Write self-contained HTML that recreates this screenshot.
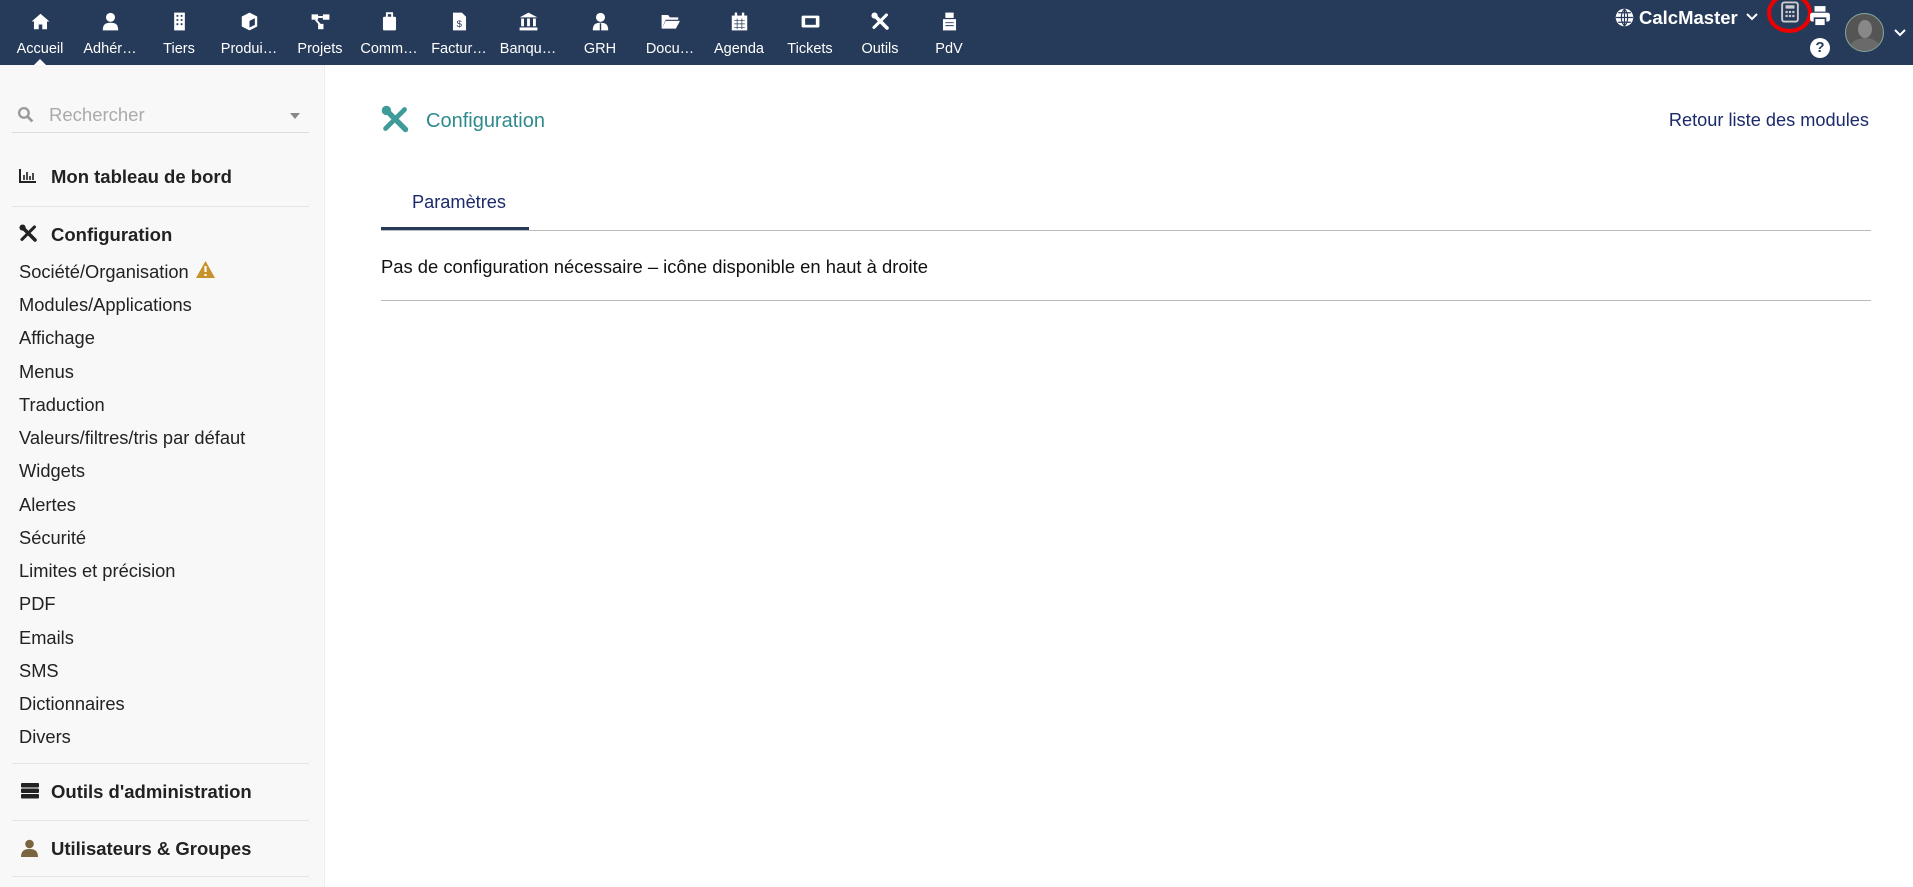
<!DOCTYPE html>
<html><head><meta charset="utf-8"><style>
*{margin:0;padding:0;box-sizing:border-box}
body{width:1913px;height:887px;overflow:hidden;font-family:"Liberation Sans",sans-serif;background:#fff;position:relative;color:#222}
.top{position:absolute;left:0;top:0;width:1913px;height:65px;background:#263a5a}
.mi{position:absolute;top:0;width:70px;height:65px;color:#fff;text-align:center}
.mi .ic{position:absolute;top:12px;left:26px;width:19px;height:19px}
.mi .lb{position:absolute;top:41px;left:-4px;width:78px;font-size:14.5px;white-space:nowrap;overflow:hidden}
.side{position:absolute;left:0;top:65px;width:325px;height:822px;background:#f8f8f8;border-right:1px solid #eee}
.a{position:absolute;white-space:nowrap}
.hr{position:absolute;left:12px;width:297px;height:1px;background:#e4e4e4}
.it{position:absolute;left:19px;font-size:18.3px;color:#222}
.h{position:absolute;left:51px;font-size:18.5px;font-weight:bold;color:#222}
</style></head><body>
<div class="top">
<div class="mi" style="left:5px"><svg class="ic" viewBox="0 0 16 16"><path d="M8 1.5L0.5 8h2v6.5h4v-4h3v4h4V8h2z" fill="#fff"/></svg><div class="lb">Accueil</div></div>
<div class="mi" style="left:75px"><svg class="ic" viewBox="0 0 16 16"><circle cx="8" cy="4.5" r="3.8" fill="#fff"/><path d="M1.5 15.5c0-5 2-6.5 6.5-6.5s6.5 1.5 6.5 6.5z" fill="#fff"/></svg><div class="lb">Adhér…</div></div>
<div class="mi" style="left:144px"><svg class="ic" viewBox="0 0 16 16"><rect x="3.5" y="0.5" width="9" height="15" fill="#fff"/><path d="M5.5 2.5h1.5v1.5H5.5zm3.5 0h1.5v1.5H9zM5.5 6h1.5v1.5H5.5zm3.5 0h1.5v1.5H9zM5.5 9.5h1.5v1.5H5.5zm3.5 0h1.5v1.5H9z" fill="#263a5a"/></svg><div class="lb">Tiers</div></div>
<div class="mi" style="left:214px"><svg class="ic" viewBox="0 0 16 16"><path d="M8 0.5l6.5 3.3v8.4L8 15.5 1.5 12.2V3.8z" fill="#fff"/><path d="M8 7.5l4.5-2.2v5.5L8 13z" fill="#263a5a"/></svg><div class="lb">Produi…</div></div>
<div class="mi" style="left:285px"><svg class="ic" viewBox="0 0 16 16"><rect x="0.5" y="2" width="5.5" height="4.5" fill="#fff"/><rect x="10" y="2" width="5.5" height="4.5" fill="#fff"/><rect x="6" y="10" width="4.5" height="4.5" fill="#fff"/><path d="M6 4.2h4M4 6.5l3.5 4" stroke="#fff" stroke-width="1.6"/></svg><div class="lb">Projets</div></div>
<div class="mi" style="left:354px"><svg class="ic" viewBox="0 0 16 16"><rect x="2.5" y="4" width="11" height="11.5" rx="1.2" fill="#fff"/><rect x="5.8" y="1" width="4.4" height="4" fill="none" stroke="#fff" stroke-width="1.6"/></svg><div class="lb">Comm…</div></div>
<div class="mi" style="left:424px"><svg class="ic" viewBox="0 0 16 16"><path d="M2.5 0.5h7.5l3.5 3.5v11.5h-11z" fill="#fff"/><text x="5.6" y="12.5" font-size="8" font-family="Liberation Sans" fill="#263a5a">$</text></svg><div class="lb">Factur…</div></div>
<div class="mi" style="left:493px"><svg class="ic" viewBox="0 0 16 16"><path d="M8 0.5l7.5 4H0.5z" fill="#fff"/><rect x="1.8" y="5.5" width="2.4" height="6.5" fill="#fff"/><rect x="6.8" y="5.5" width="2.4" height="6.5" fill="#fff"/><rect x="11.8" y="5.5" width="2.4" height="6.5" fill="#fff"/><rect x="0.5" y="13" width="15" height="2.5" fill="#fff"/></svg><div class="lb">Banqu…</div></div>
<div class="mi" style="left:565px"><svg class="ic" viewBox="0 0 16 16"><circle cx="8" cy="4.5" r="3.8" fill="#fff"/><path d="M1.5 15.5c0-5 2-6.5 6.5-6.5s6.5 1.5 6.5 6.5z" fill="#fff"/><path d="M8 9.5v6" stroke="#263a5a" stroke-width="1.2"/></svg><div class="lb">GRH</div></div>
<div class="mi" style="left:635px"><svg class="ic" viewBox="0 0 16 16"><path d="M0.5 2.5h5.5l1.5 2h7v2H4l-3.5 7.5z" fill="#fff"/><path d="M4 7.5h12l-3.5 6.5H0.5z" fill="#fff"/></svg><div class="lb">Docu…</div></div>
<div class="mi" style="left:704px"><svg class="ic" viewBox="0 0 16 16"><rect x="1.5" y="3" width="13" height="12.5" fill="#fff"/><rect x="4" y="0.5" width="2" height="3.5" fill="#fff"/><rect x="10" y="0.5" width="2" height="3.5" fill="#fff"/><path d="M3.5 7h9M3.5 10h9M3.5 13h9M6 5.5v9M10 5.5v9" stroke="#263a5a" stroke-width="0.6"/></svg><div class="lb">Agenda</div></div>
<div class="mi" style="left:775px"><svg class="ic" viewBox="0 0 16 16"><rect x="0.5" y="3" width="15" height="10" rx="1.2" fill="#fff"/><rect x="3.5" y="5.2" width="9" height="5.6" fill="#263a5a"/></svg><div class="lb">Tickets</div></div>
<div class="mi" style="left:845px"><svg class="ic" viewBox="0 0 16 16"><path d="M3 3l10.5 10.5" stroke="#fff" stroke-width="3" stroke-linecap="round"/><path d="M13 2.5L2.5 13" stroke="#fff" stroke-width="2.6" stroke-linecap="round"/><circle cx="3" cy="3" r="2.6" fill="#fff"/></svg><div class="lb">Outils</div></div>
<div class="mi" style="left:914px"><svg class="ic" viewBox="0 0 16 16"><rect x="4.5" y="0.5" width="7" height="4.5" fill="#fff"/><rect x="2.5" y="6" width="11" height="9.5" fill="#fff"/><path d="M4.5 9h7M4.5 11.5h7" stroke="#263a5a" stroke-width="0.8"/></svg><div class="lb">PdV</div></div>
<div style="position:absolute;left:34px;top:59px;width:0;height:0;border-left:6px solid transparent;border-right:6px solid transparent;border-bottom:6px solid #fff"></div>
<svg style="position:absolute;left:1615px;top:8px" width="19" height="19" viewBox="0 0 18 18"><circle cx="9" cy="9" r="8.3" fill="#fff"/><path d="M1 9h16M9 1v16M3 4.5h12M3 13.5h12M9 1c-4 4-4 12 0 16M9 1c4 4 4 12 0 16" stroke="#263a5a" stroke-width="1.1" fill="none"/></svg>
<div class="a" style="left:1639px;top:7px;color:#fff;font-weight:bold;font-size:18.5px">CalcMaster</div>
<svg style="position:absolute;left:1746px;top:13px" width="12" height="8"><path d="M1 1l5 5 5-5" stroke="#fff" stroke-width="2" fill="none"/></svg>
<div style="position:absolute;left:1767px;top:-7px;width:45px;height:40px;border:4px solid #e00;border-radius:50%"></div>
<svg style="position:absolute;left:1781px;top:1px" width="18" height="22" viewBox="0 0 16 19"><rect x="1" y="1" width="14" height="17" rx="2" fill="none" stroke="#ccc" stroke-width="1.7"/><rect x="4" y="3.5" width="8" height="3" fill="#ccc"/><path d="M4 8.5h2v2H4zm3 0h2v2H7zm3 0h2v2h-2zM4 12h2v2H4zm3 0h2v2H7zm3 0h2v2h-2z" fill="#ccc"/></svg>
<svg style="position:absolute;left:1809px;top:5px" width="22" height="22" viewBox="0 0 20 20"><rect x="5" y="1" width="10" height="5" fill="#fff"/><rect x="1" y="7" width="18" height="8" rx="2" fill="#fff"/><rect x="5" y="12" width="10" height="7" fill="#fff" stroke="#263a5a" stroke-width="1.5"/></svg>
<div style="position:absolute;left:1810px;top:38px;width:20px;height:20px;border-radius:50%;background:#fff;color:#263a5a;font-weight:bold;font-size:15px;text-align:center;line-height:20px">?</div>
<div style="position:absolute;left:1845px;top:13px;width:39px;height:39px;border-radius:50%;background:#555;border:1px solid #8a9;overflow:hidden"><div style="position:absolute;left:12px;top:6px;width:14px;height:18px;border-radius:50%;background:#888"></div><div style="position:absolute;left:4px;top:24px;width:30px;height:20px;border-radius:50% 50% 0 0;background:#6a6a6a"></div></div>
<svg style="position:absolute;left:1894px;top:29px" width="12" height="8"><path d="M1 1l5 5 5-5" stroke="#fff" stroke-width="2" fill="none"/></svg>
</div>

<div class="side">
<svg style="position:absolute;left:17px;top:41px" width="17" height="17" viewBox="0 0 16 16"><circle cx="6.5" cy="6.5" r="4.5" fill="none" stroke="#999" stroke-width="2.2"/><path d="M10 10l4.5 4.5" stroke="#999" stroke-width="2.5"/></svg>
<div class="a" style="left:49px;top:39px;font-size:18.5px;color:#aaa">Rechercher</div>
<div style="position:absolute;left:290px;top:48px;border-left:5px solid transparent;border-right:5px solid transparent;border-top:6px solid #888"></div>
<div style="position:absolute;left:12px;top:67px;width:297px;height:1px;background:#ddd"></div>
<svg style="position:absolute;left:19px;top:104px" width="17" height="14" viewBox="0 0 17 14"><path d="M1 0v13h16" stroke="#222" stroke-width="2" fill="none"/><path d="M5 6v5M8 3v8M11 7v4M14 4v7" stroke="#222" stroke-width="1.6"/></svg>
<div class="h" style="top:101px">Mon tableau de bord</div>
<div class="hr" style="top:141px"></div>
<svg style="position:absolute;left:19px;top:159px" width="19" height="19" viewBox="0 0 16 16"><path d="M3 3l10.5 10.5" stroke="#222" stroke-width="3" stroke-linecap="round"/><path d="M13 2.5L2.5 13" stroke="#222" stroke-width="2.6" stroke-linecap="round"/><circle cx="3" cy="3" r="2.6" fill="#222"/></svg>
<div class="h" style="top:159px">Configuration</div>
<div class="it" style="top:196px">Société/Organisation</div>
<svg style="position:absolute;left:195px;top:195px" width="21" height="19" viewBox="0 0 21 19"><path d="M10.5 1L20 18H1z" fill="#c8922a"/><path d="M10.5 6v6M10.5 14v2" stroke="#fff" stroke-width="2.2"/></svg>
<div class="it" style="top:229px">Modules/Applications</div>
<div class="it" style="top:262px">Affichage</div>
<div class="it" style="top:296px">Menus</div>
<div class="it" style="top:329px">Traduction</div>
<div class="it" style="top:362px">Valeurs/filtres/tris par défaut</div>
<div class="it" style="top:395px">Widgets</div>
<div class="it" style="top:429px">Alertes</div>
<div class="it" style="top:462px">Sécurité</div>
<div class="it" style="top:495px">Limites et précision</div>
<div class="it" style="top:528px">PDF</div>
<div class="it" style="top:562px">Emails</div>
<div class="it" style="top:595px">SMS</div>
<div class="it" style="top:628px">Dictionnaires</div>
<div class="it" style="top:661px">Divers</div>
<div class="hr" style="top:698px"></div>
<svg style="position:absolute;left:21px;top:718px" width="18" height="16" viewBox="0 0 18 16"><rect y="0" width="18" height="4.5" rx="1" fill="#222"/><rect y="5.5" width="18" height="4.5" rx="1" fill="#222"/><rect y="11" width="18" height="4.5" rx="1" fill="#222"/></svg>
<div class="h" style="top:716px">Outils d'administration</div>
<div class="hr" style="top:755px"></div>
<svg style="position:absolute;left:21px;top:774px" width="17" height="18" viewBox="0 0 17 18"><circle cx="8.5" cy="5" r="4.3" fill="#7a6540"/><path d="M0 18c0-6 3-8 8.5-8s8.5 2 8.5 8z" fill="#7a6540"/></svg>
<div class="h" style="top:773px">Utilisateurs &amp; Groupes</div>
<div class="hr" style="top:811px"></div>
</div>

<svg style="position:absolute;left:381px;top:105px" width="29" height="29" viewBox="0 0 16 16"><path d="M3 3l10.5 10.5" stroke="#3f9a9a" stroke-width="3" stroke-linecap="round"/><path d="M13 2.5L2.5 13" stroke="#3f9a9a" stroke-width="2.6" stroke-linecap="round"/><circle cx="3" cy="3" r="2.6" fill="#3f9a9a"/></svg>
<div class="a" style="left:426px;top:110px;font-size:20px;color:#2f8a8c">Configuration</div>
<div class="a" style="right:44px;top:110px;font-size:18.2px;color:#1b2a6b">Retour liste des modules</div>
<div class="a" style="left:412px;top:192px;font-size:18.2px;color:#1b2a6b">Paramètres</div>
<div style="position:absolute;left:381px;top:230px;width:1490px;height:1px;background:#bbb"></div>
<div style="position:absolute;left:381px;top:227px;width:148px;height:3px;background:#263a5a"></div>
<div class="a" style="left:381px;top:256px;font-size:18.4px;color:#111">Pas de configuration nécessaire – icône disponible en haut à droite</div>
<div style="position:absolute;left:381px;top:300px;width:1490px;height:1px;background:#bbb"></div>
</body></html>
